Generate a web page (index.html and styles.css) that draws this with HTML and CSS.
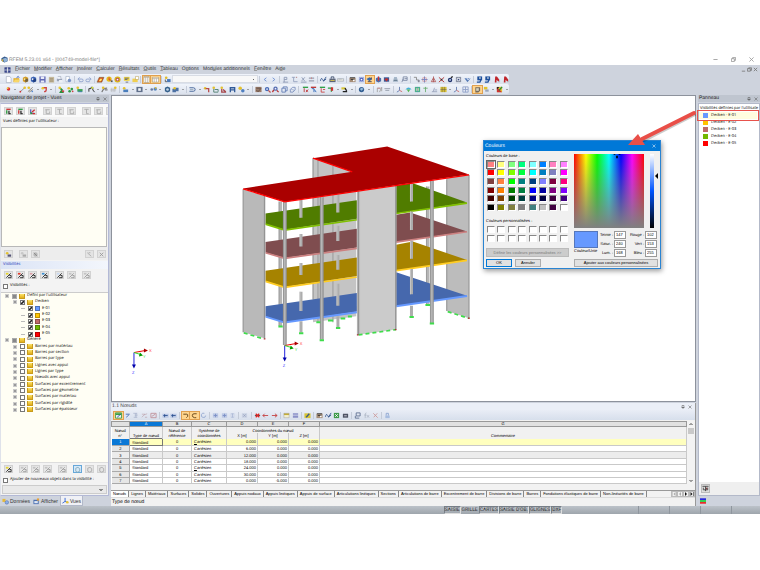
FILE: index.html
```html
<!DOCTYPE html>
<html lang="fr">
<head>
<meta charset="utf-8">
<title>RFEM</title>
<link rel="stylesheet" href="styles.css">
</head>
<body>
<div class="app">
  <header class="titlebar">
    <svg class="logo" viewBox="0 0 16 16"><path d="M1 5 8 1l7 3v8l-7 3-7-4z" fill="#345a8c"/><path d="m4 6 6-2 4 2v6l-6 2z" fill="#8fb2d8"/><path d="m1 9 4-3v8z" fill="#d8b23c"/></svg>
    <span class="title">RFEM 5.23.01 x64 - [004749-model-file*]</span>
    <div class="winctl">
      <button aria-label="Réduire"><svg viewBox="0 0 12 12"><path d="M1 6h10"/></svg></button>
      <button aria-label="Restaurer"><svg viewBox="0 0 12 12"><path d="M1 4h7v7H1zM4 4V1h7v7H8"/></svg></button>
      <button aria-label="Fermer"><svg viewBox="0 0 12 12"><path d="m1 1 10 10M11 1 1 11"/></svg></button>
    </div>
  </header>
  <nav class="menubar">
    <svg class="menulogo" viewBox="0 0 16 16"><path d="M0 1h16v14H0z" fill="#26347c"/><path d="M8 1v14M0 8h16" stroke="#fff" stroke-width="2"/><path d="M3 4h3M10 4h3M3 12h3M10 12h3" stroke="#9fb0e0"/></svg>
    <a href="#"><u>F</u>ichier</a><a href="#"><u>M</u>odifier</a><a href="#"><u>A</u>fficher</a><a href="#"><u>I</u>nsérer</a><a href="#"><u>C</u>alculer</a><a href="#"><u>R</u>ésultats</a><a href="#"><u>O</u>utils</a><a href="#"><u>T</u>ableau</a><a href="#">O<u>p</u>tions</a><a href="#">Mod<u>u</u>les additionnels</a><a href="#"><u>F</u>enêtre</a><a href="#">Ai<u>d</u>e</a>
    <div class="childctl">
      <button aria-label="Réduire la vue"><svg viewBox="0 0 12 12"><path d="M2 10h8"/></svg></button>
      <button aria-label="Restaurer la vue"><svg viewBox="0 0 12 12"><path d="M1 4h7v6H1zM4 4V2h7v6H8"/></svg></button>
      <button aria-label="Fermer la vue"><svg viewBox="0 0 12 12"><path d="m2 2 8 8M10 2l-8 8"/></svg></button>
    </div>
  </nav>
  <div class="toolbars">
    <div class="toolbar" data-icons="new open box cube save printer page2 preview - undo redo - para yball yball2 note folder2 - cols* cols2* - tree combo - prev next - axP axL axX dots - wave case ruler - photo sun view3* cubeR cubeR2 iso frame - snake plus tri cross bomb target fan - pin pin pinR pinR"></div>
    <div class="toolbar" data-icons="node v line curve v arcs v - green dotsG greenBox - fork v spline tally - surf v hole v link v solid boxes v - pipe v elbow lsup lsup2 binoc yb2 v - grid9 zoomA zoomB wire wire2 - mvR mvB mvG mvBR v cursor v - globe v - frameP beam - axis rainbow heat yarrow flag gridY v axis table - render* sq v pal v"></div>
  </div>

  <div class="work">
    <aside class="left">
      <h2 class="phead">Navigateur de projet - Vues<span class="pins"><svg viewBox="0 0 8 8"><path d="M2 1h4v4H2zM1 5h6M4 5v3"/></svg><svg viewBox="0 0 8 8"><path d="m1 1 6 6M7 1 1 7"/></svg></span></h2>
      <div class="navbody">
        <div class="ibar top" data-icons="vX vY vZ - gX gY gZ - g1 g2 g3"></div>
        <p class="lbl">Vues définies par l'utilisateur :</p>
        <div class="views"></div>
        <div class="ibar foot" data-icons="yeye - geye gno = gpen gdel"></div>
        <h3 class="vis">Visibilités</h3>
        <div class="ibar vbar" data-icons="hY hR hP hB - hW gh - gh"></div>
        <label class="chk tall"><input type="checkbox">Visibilités :</label>
        <ul class="tree"></ul>
        <div class="ibar tbar" data-icons="hY - gh gh gh - gh - ghb* gh2 gh2"></div>
        <label class="chk"><input type="checkbox">Ajouter de nouveaux objets dans la visibilité :</label>
        <select class="sel" aria-label="Visibilité cible" disabled><option></option></select>
      </div>
      <div class="navtabs">
        <button><svg viewBox="0 0 16 16"><path d="M1 2h7v7H1z" fill="#e6b93a"/><circle cx="11" cy="10" r="4" fill="#8fb0e8" stroke="#3a5a9c"/></svg>Données</button>
        <button><svg viewBox="0 0 16 16"><path d="M1 4h12v10H1z" fill="#4a6fb0"/><path d="M3 7h8v5H3z" fill="#dde6f5"/><path d="M9 1h5v5H9z" fill="#e6a03a"/></svg>Afficher</button>
        <button class="on"><svg viewBox="0 0 16 16"><path d="M7 2v8l-6 4M7 10l7 3" stroke="#2b5fd0" stroke-width="2" fill="none"/><circle cx="12" cy="12" r="3" fill="#e6c33a"/></svg>Vues</button>
      </div>
    </aside>

    <main class="center">
      <div class="canvas">
        <svg class="model" viewBox="112 96 584 306" preserveAspectRatio="xMinYMin meet">
          <g transform="translate(235 140) scale(.33333)">
            <path d="m235 55 130 45v430l-130 18z" fill="#c4c4c4"/>
            <path d="M295 78v470M250 60v490" stroke="#999" stroke-width="3"/>
            <path d="M235 55v425" stroke="#8a8a8a" stroke-width="3"/>
            <path d="M637 115 704 105v431l-67-22z" fill="#bcbcbc"/>
            <path d="M704 105v431M637 118v396" stroke="#8f8f8f" stroke-width="3"/>
            <path d="M137 185v374M580 140v356" stroke="#b5b5b5" stroke-width="10"/>
            <path d="M133 185v374M576 140v356" stroke="#8b8b8b" stroke-width="2"/>
            <g><path d="m92 500 275-40v56L150 549 92 531z" fill="#4668ad"/><path d="m485 398 213 70-213 32z" fill="#4668ad"/><path d="m92 531 58 18 217-31M485 500l213-31" stroke="#6699ff" stroke-width="6" fill="none"/></g>
            <g><path d="m92 393 275-40v56L150 442 92 425z" fill="#a68300"/><path d="m485 315 50-10 163 56-213 32z" fill="#a68300"/><path d="m92 425 58 18 217-31M485 393l213-31" stroke="#ffcc22" stroke-width="5" fill="none"/></g>
            <g><path d="m92 307 275-40v56L150 355 92 338z" fill="#7f4d4f"/><path d="m485 225 42-7 171 57-213 32z" fill="#7f4d4f"/><path d="m92 339 58 17 217-30M485 307l213-31" stroke="#cc8080" stroke-width="5" fill="none"/></g>
            <g><path d="m92 221 275-40v56L150 270 92 253z" fill="#507c00"/><path d="M485 137l50-7 163 58-213 33z" fill="#507c00"/><path d="m92 253 58 18 217-31M485 221l213-31" stroke="#80c000" stroke-width="5" fill="none"/></g>
            <path d="M199 180v54M199 283v37M199 370v36M199 456v58M199 545v34M310 165v53M310 258v46M310 346v44M310 432v66M310 530v35M531 130v55M531 215v56M531 303v54M531 388v76M531 498v34" stroke="#adadad" stroke-width="9"/>
            <path d="M196 180v54M196 283v37M196 370v36M196 456v58M307 165v53M307 258v46M307 346v44M307 432v66M528 130v55M528 215v56M528 303v54M528 388v76" stroke="#d2d2d2" stroke-width="2"/>
            <path d="m25 148 67 22v427l-67-19z" fill="#b9b9b9"/>
            <path d="M25 148v430M89 168v429" stroke="#8f8f8f" stroke-width="3"/>
            <path d="m367 155 118-17v432l-118 16z" fill="#cbcbcb"/>
            <path d="M371 154v432M484 138v431" stroke="#8f8f8f" stroke-width="4"/>
            <path d="M375 154v432" stroke="#bbb" stroke-width="3"/>
            <path d="M150 186v430M261 172v428M592 122v430" stroke="#a6a6a6" stroke-width="10"/>
            <path d="M146 186v430M257 172v428M588 122v430M155 186v430M266 172v428M597 122v430" stroke="#8c8c8c" stroke-width="2"/>
            <path d="M150 186v430M261 172v428M592 122v430" stroke="#c4c4c4" stroke-width="2"/>
            <path d="m25 146 328-50-118-41 223-35 246 84-554 82z" fill="#aa0000"/>
            <path d="m25 147 125 39 554-81M235 55l118 41" stroke="#f00" stroke-width="4" fill="none"/>
            <path d="m27 580 60 18M372 586l112-16M640 516l62 20" stroke="#3fdc4b" stroke-width="5" stroke-dasharray="12 9"/>
            <path d="M131 561h13M193 581h13M255 602h13M304 565h13M525 532h13M586 552h13M573 496h14M280 543h16M318 537h14M340 531h12M245 548h12" stroke="#3fdc4b" stroke-width="6"/>
            <path d="M87 598h5M367 586h5M481 570h5M701 536h5" stroke="#a33" stroke-width="4"/>
          </g>
          <g id="axes" fill="none">
            <path d="M134 353v13" stroke="#22d" /><path d="m132 365 2 4 2-4z" fill="#00a"/>
            <path d="m134 353 11-2" stroke="#e00"/><path d="m144 349 4 2-4 2z" fill="#a00"/>
            <path d="m134 353 7 2" stroke="#3d3"/><path d="m140 353 3 3-4 1z" fill="#090"/>
          </g>
          <use href="#axes" x="151" y="-7"/>
          <g class="axt"><text x="149" y="352" fill="#f33">X</text><text x="143" y="358" fill="#3d3">Y</text><text x="132" y="374" fill="#33f">Z</text><text x="300" y="345" fill="#f33">X</text><text x="295" y="351" fill="#3d3">Y</text><text x="283" y="367" fill="#33f">Z</text></g>
        </svg>
      </div>
      <section class="tablepane">
        <h2 class="thead">1.1 Nœuds<span class="pins"><svg viewBox="0 0 8 8"><path d="M2 1h4v4H2zM1 5h6M4 5v3"/></svg><svg viewBox="0 0 8 8"><path d="m1 1 6 6M7 1 1 7"/></svg></span></h2>
        <div class="toolbar ttool" data-icons="tgreen* tblue tz tline tred - tcol tcol - swap* swap2* refresh - tg tg ti - tx - delr arR arR2 - gridY2 rows2 - edit - photo wave excel cam - calc fx pctx - lock"></div>
        <table class="grid">
          <colgroup><col class="c0"><col class="ca"><col class="cb"><col class="cc"><col class="cd"><col class="cd"><col class="cd"><col></colgroup>
          <thead>
            <tr class="letters"><th></th><th class="sel-h">A</th><th>B</th><th>C</th><th>D</th><th>E</th><th>F</th><th>G</th></tr>
            <tr class="h1"><th>Nœud</th><th></th><th>Nœud de</th><th>Système de</th><th colspan="3">Coordonnées du nœud</th><th></th></tr>
            <tr class="h2"><th>n°</th><th>Type de nœud</th><th>référence</th><th>coordonnées</th><th>X [m]</th><th>Y [m]</th><th>Z [m]</th><th>Commentaire</th></tr>
          </thead>
          <tbody></tbody>
        </table>
        <div class="vscroll"><svg viewBox="0 0 8 8"><path d="m1 6 3-3 3 3"/></svg><i></i><svg viewBox="0 0 8 8"><path d="m1 2 3 3 3-3"/></svg></div>
        <div class="sheets"></div>
        <p class="hint">Type de nœud</p>
      </section>
    </main>

    <aside class="right">
      <h2 class="phead">Panneau<span class="pins"><svg viewBox="0 0 8 8"><path d="M2 1h4v4H2zM1 5h6M4 5v3"/></svg><svg viewBox="0 0 8 8"><path d="m1 1 6 6M7 1 1 7"/></svg></span></h2>
      <div class="rbody">
        <p class="rlbl">Visibilités définies par l'utilisate</p>
        <ul class="legend">
          <li class="cur"><i class="k1"></i>Decken - E-01</li>
          <li><i class="k2"></i>Decken - E-02</li>
          <li><i class="k3"></i>Decken - E-03</li>
          <li><i class="k4"></i>Decken - E-04</li>
          <li><i class="k5"></i>Decken - E-05</li>
        </ul>
        <div class="rfoot"><button aria-label="Options du panneau"><svg viewBox="0 0 16 16"><path d="M1 3h14M8 3v11M3 6v5h10V6" fill="none" stroke="#444" stroke-width="2"/><path d="M9 6h3v4H9z" fill="#844"/></svg></button></div>
      </div>
      <div class="rtab"><svg viewBox="0 0 16 16"><path d="M0 3h16" stroke="#11d" stroke-width="4"/><path d="M0 8h16" stroke="#0c2" stroke-width="4"/><path d="M0 13h16" stroke="#e11" stroke-width="4"/></svg></div>
    </aside>
  </div>

  <footer class="status"><span>SAISIE</span><span class="flat">GRILLE</span><span>CARTES</span><span>SAISIE D'OB.</span><span>GLIGNES</span><span>DXF</span><div class="cells"><i></i><i></i><i></i><i></i></div></footer>

  <section class="dialog" role="dialog" aria-label="Couleurs">
    <h2>Couleurs<button aria-label="Fermer le dialogue"><svg viewBox="0 0 8 8"><path d="m1 1 6 6M7 1 1 7"/></svg></button></h2>
    <div class="dbody">
      <div class="dleft">
        <p>Couleurs de base :</p>
        <div class="base"></div>
        <p>Couleurs personnalisées :</p>
        <div class="custom"></div>
        <button class="wide" disabled>Définir les couleurs personnalisées &gt;&gt;</button>
        <div class="acts"><button class="ok">OK</button><button>Annuler</button></div>
      </div>
      <div class="dright">
        <div class="pick">
          <div class="field"><svg viewBox="0 0 8 6"><path d="M0 0h2v1H0zM6 0h2v1H6zM3 2h2v3H3z" fill="#000"/></svg></div>
          <div class="lum"></div>
          <svg class="ptr" viewBox="0 0 4 8"><path d="M4 0v8L0 4z" fill="#000"/></svg>
        </div>
        <div class="vals">
          <div class="unie"><i></i>Couleur/Unie</div>
          <label for="t">Teinte :</label><input id="t" value="147"><label for="r">Rouge :</label><input id="r" value="102">
          <label for="s">Satur. :</label><input id="s" value="240"><label for="g">Vert :</label><input id="g" value="153">
          <label for="l">Lum. :</label><input id="l" value="168"><label for="b">Bleu :</label><input id="b" value="255">
        </div>
        <button class="add">Ajouter aux couleurs personnalisées</button>
      </div>
    </div>
  </section>
  <svg class="arrow" viewBox="0 0 68 38"><path d="M66 3 15 29" stroke="#00000033" stroke-width="4" stroke-linecap="round" transform="translate(1 1)"/><path d="M66 3 14 29" stroke="#e94f48" stroke-width="4" stroke-linecap="round"/><path d="M0 35 10 24l7 11z" fill="#e94f48"/></svg>
</div>
<script src="app.js"></script>
</body>
</html>
```
FILE: styles.css
```css
* { box-sizing: border-box; }
html { text-rendering: geometricPrecision; }
body { margin: 0; background: #fff; font: 4px/6px "Open Sans", "Noto Sans", sans-serif; color: #000; }
button, input, select { font: inherit; color: inherit; margin: 0; padding: 0; border: 0; background: none; border-radius: 0; }
select { appearance: none; }
h2, h3, p, ul { margin: 0; padding: 0; font-weight: normal; font-size: inherit; list-style: none; }
a { color: inherit; text-decoration: none; }
svg { display: block; }

.app { position: relative; padding-top: 54px; overflow: hidden; }

.titlebar { display: flex; align-items: center; height: 11px; padding: 0 6px 0 1px; color: #808080; font: 5px/10px "Liberation Sans", sans-serif; }
.logo { width: 7px; height: 7px; margin-right: 1px; }
.winctl { margin-left: auto; display: flex; gap: 13px; }
.winctl button, .childctl button { width: 5px; height: 5px; }
.winctl svg, .childctl svg { fill: none; stroke: #777; stroke-width: 2; width: 5px; height: 5px; }
.winctl svg { stroke: #999; }

.menubar { display: flex; align-items: center; gap: 4px; height: 9px; padding: 0 2px 0 4px; background: #ced3dd; color: #333; font: 5px/9px "Liberation Sans", sans-serif; }
.menubar u { text-decoration-thickness: 1px; text-decoration-color: #999; text-underline-offset: 0; }
.menulogo { width: 7px; height: 6px; }
.childctl { margin-left: auto; display: flex; gap: 1px; }

.toolbars { background: #ced3dd; height: 20px; display: grid; align-content: start; }
.toolbar { display: flex; align-items: center; width: 67%; height: 10px; padding: 0 0 0 4px; background: linear-gradient(#f0f4fb, #dbe1ec); border-radius: 0 2px 2px 0; }
.toolbar button { flex: 1 1 0; min-width: 0; height: 9px; display: grid; place-items: center; border: 1px solid transparent; margin: 0 -1px; }
.toolbar button svg { width: 7px; height: 7px; overflow: visible; }
.toolbar button.hl { background: #ffd58e; border-color: #e0a050; }
.toolbar i { flex: .4 1 0; display: grid; place-items: center; height: 7px; }
.toolbar i.dd { flex: .6 1 0; }
.toolbar i.sep::before { content: ""; width: 1px; height: 7px; background: #c4cbd8; }
.toolbar i.dd::before { content: ""; border: 1px solid transparent; border-top-color: #555; border-bottom: 0; }
.toolbar select { flex: 9.8 1 0; min-width: 0; height: 8px; border: 1px solid #d8dce4; background: conic-gradient(from -45deg at 50% 100%, #666 90deg, transparent 0) right 2px center / 3px 1px no-repeat #f8f8f8; }

.work { display: grid; grid-template-columns: 109px minmax(0, 1fr) 62px; gap: 2px; background: #ced3dd; height: 412px; padding-top: 1px; }
.phead { display: flex; align-items: center; justify-content: space-between; height: 7px; margin-bottom: 1px; background: #bfc5cf; padding: 0 2px 0 1px; color: #222; font: 5px/7px "Liberation Sans", sans-serif; flex: none; }
.pins { display: flex; gap: 3px; }
.pins svg { width: 4px; height: 4px; fill: none; stroke: #555; }

.left { display: flex; flex-direction: column; min-width: 0; }
.navbody { flex: 1; min-height: 0; display: flex; flex-direction: column; border: 1px solid #b3b9d6; border-left-color: #dfe2ea; background: #f3f3f3; }
.navbody > * { flex: none; }
.ibar { display: flex; align-items: center; gap: 3px; padding: 0 2px 0 3px; height: 13px; overflow: hidden; }
.ibar button { width: 9px; height: 8px; flex: none; background: #e4e4e4; border: 1px solid #d2d2d2; display: grid; place-items: center; }
.ibar button svg { width: 7px; height: 7px; }
.ibar button.hl { background: #d5e9f8; border-color: #66a7d8; }
.ibar i { width: 0; }
.ibar i.push { margin-left: auto; }
.ibar.top { background: #fafafa; }
.lbl { height: 10px; line-height: 10px; padding-left: 2px; }
.views { height: 120px; margin-right: 1px; background: #fffef4; border: 1px solid #b8b8b8; }
.ibar.foot { background: #ededed; }
.vis { height: 8px; margin-top: 1px; background: linear-gradient(90deg, #dbe4f6, #f3f6fc); color: #1c30b4; line-height: 8px; padding-left: 2px; }
.ibar.vbar { height: 11px; }
.chk { display: flex; align-items: center; gap: 2px; height: 10px; padding-left: 2px; }
.chk.tall { height: 12px; }
.chk input, .tree input { appearance: none; width: 5px; height: 5px; background: #fff; border: 1px solid #777; flex: none; }
.tree { display: grid; height: 170px; padding-bottom: 49px; background: #fffef4; border-top: 1px solid #ccc; }
.tree li { display: flex; align-items: center; gap: 2px; padding-left: 4px; white-space: nowrap; min-height: 0; }
.tree label { line-height: 6px; }
.tree .l1 { padding-left: 12px; }
.tree .l2 { padding-left: 20px; }
.tree .tw { width: 4px; height: 4px; border: 1px solid #ccc; background: #999; margin-right: 1px; }
.tree li.l2 .tw { background: #bbb; height: 1px; border: 0; }
.tree input:checked { background: linear-gradient(135deg, #fff 20%, #222 45%, #222 60%, #fff 85%); }
.tree input:indeterminate { background: #888; border-color: #aaa; }
.tree .fold { width: 6px; height: 5px; background: linear-gradient(#fbe36a, #e2ae18); border: 1px solid #c79a1c; border-top-width: 0; }
.sw { width: 5px; height: 5px; border: 1px solid #0004; }
.k1 { background: #6699ff; } .k2 { background: #ffc400; } .k3 { background: #bf6a6a; } .k4 { background: #72b800; } .k5 { background: #f00; }
.tbar { border-top: 1px solid #ddd; }
.sel { height: 9px; margin: 0 1px; border: 1px solid #ccc; opacity: 1; background: conic-gradient(from -45deg at 50% 100%, #888 90deg, transparent 0) right 3px center / 4px 2px no-repeat #e9e9e9; }
.navtabs { display: flex; gap: 1px; height: 10px; padding: 0 1px; color: #333; font: 5px/8px "Liberation Sans", sans-serif; flex: none; }
.navtabs button { display: flex; align-items: center; gap: 1px; padding: 0 1px; }
.navtabs button.on { background: #f0f1f6; border: 1px solid #b3b9c9; border-top: 0; }
.navtabs svg { width: 7px; height: 7px; }

.center { display: flex; flex-direction: column; min-width: 0; }
.canvas { flex: 1; min-height: 0; background: #fff; border: 1px solid #8d929c; overflow: hidden; }
.model { width: 100%; }
.axt { font: 4px "Liberation Sans", sans-serif; }
.tablepane { display: grid; grid-template-columns: minmax(0, 1fr) 8px; margin-top: 1px; background: #f2f2f2; border-right: 1px solid #999; flex: none; }
.thead { grid-column: 1 / -1; display: flex; align-items: center; justify-content: space-between; height: 7px; background: #ebeff7; padding: 0 3px 0 1px; color: #444; font: 5px/7px "Liberation Sans", sans-serif; }
.ttool { grid-column: 1 / -1; width: auto; height: 10px; padding: 0 52% 0 3px; border-radius: 0; background: linear-gradient(#e9edf6, #d7dfec); }
.grid { width: 100%; height: 63px; margin-top: 1px; border-collapse: collapse; table-layout: fixed; font: 4px/5px "Liberation Sans", sans-serif; background: #fff; }
.grid th, .grid td { padding: 0; font-weight: normal; border: 0 solid #c9c9c9; border-right-width: 1px; white-space: nowrap; overflow: hidden; }
.grid thead th { background: #f1f1f1; }
.grid .letters th { background: #e1e1e1; border: 1px solid #999; line-height: 4px; height: 4px; }
.grid .letters .sel-h { background: #0a78d6; color: #fff; }
.grid .h1 th, .grid .h2 th { height: 6px; }
.grid .h1 th { vertical-align: bottom; }
.grid td { border-bottom: 1px solid #c9c9c9; height: 6px; }
.c0 { width: 18px; } .ca { width: 33px; } .cb { width: 29px; } .cc { width: 35px; } .cd { width: 31px; }
.grid td:first-child { background: #e6e6e6; text-align: center; border-color: #aaa; }
.grid td:nth-child(2), .grid td:nth-child(4) { padding-left: 2px; }
.grid td:nth-child(3) { text-align: center; }
.grid td:nth-child(n+5) { text-align: right; padding-right: 1px; }
.grid tr.on td { background: #ffffbe; }
.grid tr.on td:first-child { background: #0a78d6; color: #fff; }
.grid tr.on td:nth-child(2) { border: 1px solid #777; }
.grid tr.alt td { background: #ececec; }
.vscroll { margin-top: 1px; display: flex; flex-direction: column; align-items: center; justify-content: space-between; background: #f3f3f3; }
.vscroll svg { width: 4px; height: 6px; fill: none; stroke: #444; stroke-width: 2; }
.vscroll i { width: 6px; height: 6px; background: #c9c9c9; margin-bottom: 43px; }
.sheets { grid-column: 1 / -1; display: flex; height: 8px; margin-top: 6px; border-top: 1px solid #999; border-bottom: 1px solid #ddd; font: 4px/6px "Liberation Sans", sans-serif; }
.sheets button { padding: 0 2px; border-right: 1px solid #888; white-space: nowrap; }
.sheets button.on { background: #fff; }
.sheets .nav { margin-left: auto; display: flex; }
.sheets .nav button { width: 6px; padding: 0; border: 1px solid #bbb; display: grid; place-items: center; }
.sheets svg { width: 4px; height: 4px; fill: #111; }
.sheets .off svg { fill: #aaa; }
.hint { grid-column: 1 / -1; height: 8px; line-height: 8px; padding-left: 1px; font-size: 5px; font-family: "Liberation Sans", sans-serif; }

.right { display: flex; flex-direction: column; min-width: 0; }
.rbody { flex: 1; display: flex; flex-direction: column; background: #fff; border: 1px solid #b3b9c9; padding-top: 1px; }
.rlbl { height: 7px; line-height: 7px; white-space: nowrap; padding-left: 1px; }
.legend { margin-right: 2px; }
.legend li { display: flex; align-items: center; height: 7px; gap: 3px; padding-left: 4px; }
.legend li i { width: 5px; height: 5px; }
.legend .cur { background: #fffde0; outline: 1px solid #e8524c; outline-offset: 1px; position: relative; }
.rfoot { margin-top: auto; height: 13px; background: #efefef; display: flex; align-items: center; padding-left: 2px; }
.rfoot button { width: 9px; height: 9px; background: #ddd; border: 1px solid #bbb; }
.rfoot svg { width: 7px; height: 7px; }
.rtab { height: 10px; padding: 2px; }
.rtab svg { width: 6px; height: 6px; }

.status { display: flex; height: 8px; align-items: center; padding-left: 58.4%; background: linear-gradient(#bcc2c9, #9ea5ac); font: 5px/6px Roboto, sans-serif; color: #333; }
.status span { border: 1px solid #777f88; border-right-color: #ddd; border-bottom-color: #ddd; white-space: nowrap; }
.status .flat { border-color: transparent; }
.cells { flex: 1; display: flex; justify-content: flex-end; gap: 30px; padding-right: 28px; }
.cells i { width: 1px; height: 8px; background: #8f969e; }

.dialog { position: absolute; left: 483px; top: 140px; width: 178px; background: #f0f0f0; border: 1px solid #2a84d2; box-shadow: 1px 2px 5px #0006; font: 4px/6px "Liberation Sans", sans-serif; color: #000; }
.dialog h2 { display: flex; align-items: center; justify-content: space-between; height: 10px; padding: 0 4px 0 1px; background: #0078d7; color: #fff; font-size: 5px; }
.dialog h2 svg { width: 4px; height: 4px; stroke: #fff; fill: none; }
.dbody { display: flex; justify-content: space-between; padding: 2px 2px 1px 2px; }
.dleft { width: 83px; display: flex; flex-direction: column; }
.dleft p { line-height: 6px; height: 7px; }
.base, .custom { display: grid; grid-template-columns: repeat(8, 1fr); grid-auto-rows: 1fr; }
.base { height: 52px; margin-bottom: 6px; }
.custom { height: 18px; margin-bottom: 5px; }
.base button, .custom button { width: 8px; height: 7px; border: 1px solid #fff; border-top-color: #888; border-left-color: #888; align-self: center; margin-left: 1px; }
.base button.on { outline: 1px solid #666; }
.custom button { background: #fff; }
.wide { height: 9px; border: 1px solid #bbb; background: #ccc; color: #777; white-space: nowrap; }
.acts { display: flex; gap: 3px; margin-top: 2px; }
.acts button, .add { height: 8px; width: 26px; line-height: 6px; border: 1px solid #adadad; background: #e1e1e1; }
.acts .ok { border-color: #0078d7; }
.dright { width: 84px; display: flex; flex-direction: column; padding-top: 1px; }
.pick { display: flex; height: 74px; }
.field { width: 70px; background: linear-gradient(#80808000, #808080), linear-gradient(90deg, #f00, #ff0 17%, #0f0 33%, #0ff 50%, #00f 67%, #f0f 83%, #f00); }
.field svg { width: 8px; height: 5px; margin-left: 39px; }
.lum { width: 4px; margin-left: 6px; background: linear-gradient(#fff, #6699ff 30%, #0055ff 50%, #000); }
.ptr { width: 3px; height: 6px; margin: 19px 0 0 1px; }
.vals { display: grid; grid-template-columns: 24px 14px 12px 17px 12px; grid-auto-rows: 9px; column-gap: 1px; margin-top: 2px; align-items: center; white-space: nowrap; }
.vals label { text-align: right; }
.vals input { width: 12px; height: 8px; background: #fff; border: 1px solid #999; padding-left: 1px; }
.unie { grid-row: 1 / 4; align-self: start; }
.unie i { display: block; height: 17px; background: #6699ff; border: 1px solid #5577bb; margin-top: 1px; }
.add { width: 84px; margin-top: auto; }
.arrow { position: absolute; left: 628px; top: 110px; width: 68px; height: 38px; fill: none; pointer-events: none; }
```
FILE: app.js
```js
// Shape helpers for the 16x16 toolbar glyphs.
const f = (d, c) => `<path d="${d}" fill="${c}"/>`;
const s = (d, c, w = 2) => `<path d="${d}" fill="none" stroke="${c}" stroke-width="${w}"/>`;
const o = (x, y, r, c) => `<circle cx="${x}" cy="${y}" r="${r}" fill="${c}"/>`;
const frame = 'M2 3h12v10H2z';
const hatch = (c, k = '#222') => f('M2 3h12v11H2z', '#e8e8e8') + s('M3 13 13 3M7 13h7M10 8h4v5', k, 2) + f('M2 2h6v4H2z', c);
const axes = (a, b, c) => s('M3 3h10', a, 3) + s('M4 5v8', b, 3) + s('M9 6v7h4', c, 3);
const pin = c => f('M3 1h11v9H3z', c) + s('M2 14h7l2-5', c, 3) + f('M7 3h4v3H7z', '#bcd');

const I = {
  new: f('M3 1h8l3 4v10H3z', '#fff') + s('M3 1h8l3 4v10H3z', '#8089a0', 1),
  open: f('M1 5h13v9H1z', '#e3ae2a') + f('M4 8h12l-3 6H1z', '#f8d768') + s('M8 4l4-3 2 3', '#35a', 2),
  box: f('M2 4l6-3 6 3v8l-6 3-6-3z', '#d39a25') + f('M6 6h8v6l-6 3z', '#75643f') + o(6, 7, 2, '#fff0a0'),
  cube: f('M2 4l6-3 6 3v8l-6 3-6-3z', '#3b63b4') + f('M6 6h8v6l-6 3z', '#1f3f82') + o(6, 7, 2, '#fff'),
  save: f('M1 1h14v14H1z', '#5f67b4') + f('M4 1h8v6H4zM4 10h8v5H4z', '#e8ebf8'),
  printer: f('M2 2h12v13H2z', '#c6b99c') + s('M4 6h8M4 9h8M4 12h8', '#807558', 1),
  page2: f('M2 6h12v6H2z', '#9aa4b8') + f('M4 1h8v5H4zM7 9h8v6H7z', '#eef1f6') + s('M4 1h7v5', '#8089a0', 1),
  preview: f('M2 1h8v12H2z', '#fff') + s('M2 1h8v12H2z', '#7c8caa', 1) + o(10, 10, 4, '#7892c4'),
  undo: s('M3 7h8q3 0 3 3t-3 3H5M6 3 2 7l4 4', '#8da0cc', 2),
  redo: s('M13 7H5Q2 7 2 10t3 3h6M10 3l4 4-4 4', '#8da0cc', 2),
  para: f('M5 3h11l-5 11H0z', '#d84a20') + f('M7 6h5l-3 6H4z', '#ffe860') + s('M5 3h11l-5 11H0z', '#5a6a30', 1),
  yball: o(7, 7, 6, '#e5bd1d') + s('M7 3v6h4', '#d33', 2) + f('M11 10h4v4h-4z', '#555'),
  yball2: o(8, 8, 7, '#d9b51c') + o(8, 8, 4, '#b54a5a') + o(8, 8, 2, '#fff'),
  note: f('M2 2h13v9H2z', '#f0d53c') + s('M4 5h9M4 8h6M6 14h6', '#667', 2),
  folder2: f('M1 6h12v8H1z', '#f1cf50') + f('M8 1h7v7H8z', '#fff') + s('M8 1h7v7H8z', '#aa8c30', 1),
  cols: f('M2 1h12v14H2z', '#fff') + s('M2 1h12v14H2zM2 3h12M6 3v12M10 3v12', '#89795e', 1),
  cols2: f('M1 3h14v11H1z', '#fff') + s('M1 3h14v11H1zM1 6h14M5 6v8M10 6v8', '#89795e', 1),
  tree: o(5, 4, 3, '#e0bb28') + f('M7 7h8v7H7z', '#4a78b8') + s('M3 8v5h4', '#555', 2),
  prev: s('m10 4-5 4 5 4', '#6d8ed0', 2), next: s('m6 4 5 4-5 4', '#6d8ed0', 2),
  axP: s('M5 14V3h6v5H5M2 14h12', '#8c98b4', 2), axL: s('M2 3h7M6 3v10h9', '#93a0bd', 2) + s('M11 3h3', '#a77', 2),
  axX: s('M4 3l7 9M11 3l-7 8M2 14h13', '#8c98b4', 2), dots: s('M2 5h12M2 11h12', '#999fb0', 3) + s('M8 3v4', '#c88', 2),
  wave: s('M1 11q2-9 5-3t3 2l5-8M7 12l7-5', '#34558c', 2), case: f('M1 6h14v8H1z', '#58627a') + s('M5 6V2h6v4', '#3a4a6a', 2) + f('M3 9h10v2H3z', '#e4cc50'),
  ruler: f('M1 6h14v6H1z', '#e5e5df') + s('M1 6h14v6H1zM5 6v3M9 6v3', '#8790a0', 1),
  photo: f('M1 4h14v10H1z', '#a68e78') + s('M2 4h12M4 8h8', '#333', 2) + o(11, 10, 2, '#fff'),
  sun: f('M2 2h12v12H2z', '#a6b3df') + o(8, 8, 4, '#4357b8') + o(8, 8, 2, '#fff'),
  view3: f('M1 7l7-4 6 4-6 5z', '#3c68a6') + s('M4 13h9M12 3v5', '#335', 2),
  cubeR: f('M2 5l6-3 6 3v7l-6 3-6-3z', '#4d6da8') + s('M8 1v10', '#c33', 3), cubeR2: f('M2 3h12v10H2z', '#385a98') + s('M4 8h8M8 5v7', '#c23030', 3),
  iso: f('M5 2h6l3 11H2z', '#a5b6c8') + s('M4 10h8', '#5b7186', 2), frame: s('M5 2h9v8H5zM5 6l-3 8M8 6h6', '#7f8ba6', 2),
  snake: s('M2 3h6v6h5v5', '#888', 2) + f('M11 9h4v5h-4z', '#889'), plus: s('M8 1v14M1 8h14', '#6b83c8', 2) + s('M4 4h8v8H4z', '#c66', 1),
  tri: s('M8 1v13M3 13l5-9 5 9z', '#b25b5b', 2), cross: s('M2 3l12 11M14 3 2 14', '#b02a2a', 2) + o(8, 8, 2, '#333'),
  bomb: o(7, 9, 5, '#22336e') + s('M9 4l4-3', '#222', 3) + o(7, 9, 2, '#cde'), target: f('M2 2h12v12H2z', '#8b92a4') + o(8, 8, 4, '#e5e8f0') + o(8, 8, 2, '#3d4f80'),
  fan: f('M1 5h14l-7 9z', '#577cb8') + s('M6 3l3 6 4-4', '#dfe8f8', 2), pin: pin('#1d4f9c'), pinR: f('M5 1h4l5 7v5L8 9v6H4z', '#c0262c') + s('M10 14h5V8', '#9ab', 1),
  node: o(8, 7, 4, '#d33') + o(6, 5, 2, '#f2d23a'), line: s('M2 14 13 4', '#888', 2) + o(13, 4, 3, '#e6c22a') + o(3, 13, 2, '#c33'),
  curve: s('M2 13 13 3M5 14l8-6', '#8a7f6a', 2) + o(4, 4, 3, '#e6c22a') + o(12, 12, 2, '#58c'), arcs: s('M3 4h9v4q0 5-5 5', '#c44', 3) + o(4, 5, 3, '#e8c835'),
  green: s('M4 4l5 5-3 5h7', '#28903c', 4) + o(4, 4, 3, '#e8c835') + f('M9 10h5v4H9z', '#c44'), dotsG: o(4, 5, 3, '#e3c130') + o(11, 7, 3, '#2f9b46') + o(6, 12, 3, '#2f9b46') + o(13, 12, 2, '#c44'),
  greenBox: f('M3 7h12v6H3z', '#3da253') + o(4, 4, 3, '#e3c130') + s('M5 13h9', '#37a', 2), fork: s('M2 13V6h5V3h4v6l4 5', '#222', 2) + f('M8 2h4v4H8z', '#de3'),
  spline: s('M2 14q3-9 12-9M9 9h6', '#7d7d7d', 3) + o(5, 4, 3, '#e3c130'), tally: s('M3 4v10M7 4v10M11 4v10M1 9h13', '#999', 1) + o(12, 4, 3, '#e3c130'),
  surf: f('M3 8h11v6H3z', '#4a7ebc') + o(5, 5, 3, '#e3c130'), hole: f('M1 2h14v12H1z', '#61708c') + f('M5 5h6v6H5z', '#f2f4f8'),
  link: o(4, 8, 3, '#667ca6') + o(12, 7, 4, '#5b88bd') + o(13, 4, 2, '#e3c130'), solid: f('M2 4l6-3 6 3v8l-6 3-6-3z', '#35608c') + o(8, 8, 3, '#c3d3e4'),
  boxes: f('M1 6h8v8H1zM8 4h7v8H8z', '#4c71a4') + o(6, 5, 3, '#e3c130'), pipe: s('M1 4h9q4 0 4 4t-4 4H1', '#3a5d94', 2) + s('M2 8h8', '#9ab', 2),
  elbow: o(5, 5, 3, '#e3c130') + s('M6 6h7v8', '#b64b4b', 3), lsup: o(4, 4, 3, '#e3c130') + s('M4 7v7h10M6 8h8v5', '#4a7a6a', 2), lsup2: o(4, 4, 3, '#e3c130') + s('M4 7v7h10M7 8l6 5', '#a6484c', 3),
  binoc: s('M3 14V4h10v10M3 9h10', '#315a98', 3), yb2: o(5, 5, 4, '#e3c130') + o(11, 11, 4, '#4f7fc0'),
  grid9: f('M1 2h14v12H1z', '#9a7a68') + s('M3 5h9M3 9l4 4 7-8', '#272727', 1), zoomA: o(7, 7, 5, '#4469b4') + o(7, 7, 2, '#eef') + s('M10 10l5 5', '#b55', 3), zoomB: o(8, 6, 5, '#556db0') + o(8, 6, 2, '#eef') + s('M4 9l-3 5M11 10l4 4', '#b33', 3),
  wire: s('M2 5h8v9H2zM5 5V2h9v9h-4', '#647eb6', 2), wire2: s('M3 8l5-5h6v6l-5 5H3z', '#7b90bd', 2) + s('M4 8h6v5', '#7b90bd', 1),
  mvR: s('M2 3h12', '#2b9d43', 3) + s('M5 5v9M9 9l5 4M14 8l-5 6', '#b33', 2), mvB: s('M2 3h12', '#b33', 3) + s('M4 6h5v8M10 8l4 6', '#2b67b8', 2), mvG: s('M2 3h12', '#2b9d43', 3) + s('M5 5v9h8M9 8h5', '#c44', 2), mvBR: s('M2 5h8v8', '#2b9d43', 3) + f('M9 3h5v8H9z', '#c33'),
  cursor: f('M1 3h9v5H1z', '#d8c63a') + s('M4 13h10M9 5l4 6', '#222', 3), globe: o(8, 8, 6, '#335f92') + f('M8 4l5 2-5 5-4-4z', '#95bcdc'),
  frameP: s('M3 14V5h7M8 14l5-11M13 3v9', '#a0a0a0', 2) + s('M3 5h7', '#c88', 2), beam: s('M1 6h13M3 10h9', '#929aa8', 2),
  axis: s('M8 2v8l-6 4', '#5f79ae', 2) + s('M8 10l6 3', '#c66', 2), rainbow: f('M1 8q7-9 14 0z', '#44b0d8') + f('M4 8h8l-4 6z', '#57b854'), heat: f('M2 2h12v12H2z', '#4bb08d') + f('M5 5h6v6H5z', '#c8ddaa') + s('M8 2v12', '#5b7bd0', 1),
  yarrow: s('M8 2v12M3 5h10', '#6cae72', 2), flag: s('M2 13h12M5 13l3-9M8 9h6', '#98a2bc', 2), gridY: f('M1 2h14v12H1z', '#d8bf35') + s('M1 8h14M5 2v12M10 2v12', '#555', 1), table: s('M2 2h12v12H2zM2 8h12M8 2v12', '#8fa0c8', 2),
  render: f('M3 3h11v8l-4 4H3z', '#75695a') + f('M5 5h6v6H5z', '#d7d3c0'), sq: f('M2 2h8v6H2z', '#e1c32b') + f('M5 8h8v5H5z', '#9aa6bc'), pal: f('M2 2h12v12H2z', '#e3c130') + f('M2 2l12 12H2z', '#c33') + f('M2 2h6L2 8z', '#222') + s('M7 10l7-8', '#2a8a3a', 3),
  vX: axes('#c33', '#2a9a3f', '#333'), vY: axes('#2a9a3f', '#c33', '#333'), vZ: s('M4 3v9h8', '#22a', 2) + s('M7 9l6-5M8 13h6', '#c33', 3) + f('M3 10h4v4H3z', '#2a9a3f'),
  tgreen: f('M1 2h14v12H1z', '#eef') + s('M1 2h14v12H1z', '#3a9b3f', 2) + f('M2 3h12v4H2z', '#3a9b3f') + s('M5 12l8-7', '#2b5a9c', 2), tblue: f(frame, '#dfe6f4') + s('M4 5h9M5 12l6-5', '#4468aa', 2), tz: s('M3 3h9M6 7h7M4 12h8M9 3v9', '#7f8cae', 1), tline: s('M2 12q4-7 12-8M2 5h7M9 12h5', '#a97e88', 1), tred: s('M2 3h12v10H2zM4 10l8-5', '#c09099', 2),
  tcol: f('M1 4h14v9H1z', '#b8c6e4') + s('M3 8h10M6 5v7', '#2d5190', 2), swap: s('M3 5h8q3 0 2 5l-3 3', '#5a3a10', 2), swap2: s('M13 4H7Q3 4 3 8t5 5h4', '#5a3a10', 2), refresh: s('M13 8a5 5 0 1 1-3-5', '#94a8d0', 2),
  tg: f(frame, '#bac6e4') + s('M8 4v8M4 8h8', '#7a8fc5', 2), ti: f(frame, '#d5dcec') + s('M8 4v8M5 4h6M5 12h6', '#8d9cc5', 1), tx: f(frame, '#c8d0e2') + s('M5 5l6 6M11 5l-6 6', '#8290b0', 1),
  delr: s('M2 8h12', '#444', 2) + s('M4 4l8 8M12 4l-8 8', '#d22', 3), arR: s('M2 8h12M6 4 2 8l4 4', '#c54040', 2), arR2: s('M2 8h12M9 4l5 4-5 4', '#c54040', 2),
  gridY2: f(frame, '#f3f0d0') + f('M2 3h12v4H2z', '#c5ad36') + s(frame, '#999', 1), rows2: f('M2 3h12v3H2zM2 8h12v5H2z', '#8a90c8'), edit: f('M1 3h14v11H1z', '#d8c434') + s('M5 12l7-8', '#3a5a8a', 3),
  excel: f('M2 2h12v12H2z', '#3f9a4b') + s('M5 5l6 6M11 5l-6 6', '#fff', 2), cam: f('M2 4h12v9H2z', '#4d5363') + f('M5 7h6v3H5z', '#aab'), calc: s('M5 2h9v7H5zM3 9v5h9', '#5f6f90', 2), fx: s('M8 2Q5 2 5 6v8M3 7h5M9 7l5 6M14 7l-5 6', '#8a93a5', 1), pctx: s('M3 3l10 10M12 3 4 12', '#c99', 2), lock: f('M3 8h10v6H3z', '#a7bde0') + s('M5 8V3h5v5', '#8aa4d0', 2),
  hY: hatch('#e6d32e'), hR: hatch('#e04030'), hP: hatch('#d8a0a8'), hB: hatch('#3e8fd0'), hW: hatch('#c8d8f0'), gh: hatch('#c4c4c4', '#999'), gh2: s('M4 12V5l5-2 4 3v6l-5 2z', '#aaa'), ghb: s('M4 12V5l5-2 4 3v6l-5 2z', '#8ab'),
  yeye: o(5, 5, 3, '#e3c130') + f('M6 8h8v5H6z', '#557') , geye: o(5, 5, 3, '#c8c8c8') + f('M6 8h8v5H6z', '#aaa'), gno: o(8, 8, 5, '#b8b8b8') + s('M4 4l8 8', '#888'), gpen: s('M3 4l9 8M10 4H6', '#aaa'), gdel: s('M4 4l8 8M12 4l-8 8', '#999'),
};
['gX', 'gY', 'gZ', 'g1', 'g2', 'g3'].forEach((k, i) => I[k] = s(i % 2 ? 'M3 3h10M8 3v10h5' : 'M3 4h10M5 4v9h8V8', '#aaa', 2));

document.querySelectorAll('[data-icons]').forEach(bar => {
  bar.innerHTML = bar.dataset.icons.split(' ').map(t => {
    if (t === '-') return '<i class="sep"></i>';
    if (t === '=') return '<i class="push"></i>';
    if (t === 'v') return '<i class="dd"></i>';
    if (t === 'combo') return '<select aria-label="Cas de charge"><option></option></select>';
    const hl = t.endsWith('*'), n = t.replace('*', '');
    return `<button aria-label="${n}"${hl ? ' class="hl"' : ''}><svg viewBox="0 0 16 16">${I[n]}</svg></button>`;
  }).join('');
});

const tree = [[0, "Défini par l'utilisateur", 'mix'], [1, 'Decken', 'on'], ...[1, 2, 3, 4, 5].map(n => [2, 'E-0' + n, 'on', n]), [0, 'Généré', 'mix'],
  ...['Barres par matériau', 'Barres par section', 'Barres par type', 'Lignes avec appui', 'Lignes par type', 'Nœuds avec appui', 'Surfaces par excentrement', 'Surfaces par géométrie', 'Surfaces par matériau', 'Surfaces par rigidité', 'Surfaces par épaisseur'].map(t => [1, t, ''])];
const ul = document.querySelector('.tree');
ul.style.gridTemplateRows = `repeat(${tree.length}, 1fr)`;
ul.innerHTML = tree.map(([l, t, st, n], i) => `<li class="l${l}"><i class="tw"></i><input type="checkbox" id="n${i}"${st === 'on' ? ' checked' : ''}${st === 'mix' ? ' data-mix' : ''}><i class="${n ? 'sw k' + n : 'fold'}"></i><label for="n${i}">${t}</label></li>`).join('');
ul.querySelectorAll('[data-mix]').forEach(c => c.indeterminate = true);

const rows = [['0.000', '0.000'], ['6.000', '0.000'], ['12.000', '0.000'], ['18.000', '0.000'], ['24.000', '0.000'], ['30.000', '0.000'], ['0.000', '-5.000']];
document.querySelector('.grid tbody').innerHTML = rows.map(([x, y], i) => `<tr class="${i === 0 ? 'on' : i === 2 ? 'alt' : ''}"><td>${i + 1}</td><td>Standard</td><td>0</td><td><u>C</u>artésien</td><td>${x}</td><td>${y}</td><td>0.000</td><td></td></tr>`).join('');

const nav = [['Première', 'M1 0h1v8H1zM7 0v8L3 4z', 1], ['Précédente', 'M6 0v8L2 4z', 1], ['Suivante', 'M2 0v8l4-4z'], ['Dernière', 'M6 0h1v8H6zM1 0v8l4-4z']];
document.querySelector('.sheets').innerHTML = ['Nœuds', 'Lignes', 'Matériaux', 'Surfaces', 'Solides', 'Ouvertures', 'Appuis nodaux', 'Appuis linéiques', 'Appuis de surface', 'Articulations linéiques', 'Sections', 'Articulations de barre', 'Excentrement de barre', 'Divisions de barre', 'Barres', 'Fondations élastiques de barre', 'Non-linéarités de barre']
  .map((t, i) => `<button${i ? '' : ' class="on"'}>${t}</button>`).join('') + '<div class="nav">' + nav.map(([n, d, off]) => `<button aria-label="${n}"${off ? ' class="off"' : ''}><svg viewBox="0 0 8 8"><path d="${d}"/></svg></button>`).join('') + '</div>';

const base = ['ff8080 ffff80 80ff80 00ff80 80ffff 0080ff ff80c0 ff80ff', 'ff0000 ffff00 80ff00 00ff40 00ffff 0080c0 8080c0 ff00ff', '804040 ff8040 00ff00 008080 004080 8080ff 800040 ff0080', '800000 ff8000 008000 008040 0000ff 0000a0 800080 8000ff', '400000 804000 004000 004040 000080 000040 400040 400080', '000000 808000 808040 808080 408080 c0c0c0 400040 ffffff'].join(' ').split(' ');
document.querySelector('.base').innerHTML = base.map((c, i) => `<button aria-label="#${c}"${i ? '' : ' class="on"'} style="background:#${c}"></button>`).join('');
document.querySelector('.custom').innerHTML = '<button aria-label="Couleur libre"></button>'.repeat(16);
```
